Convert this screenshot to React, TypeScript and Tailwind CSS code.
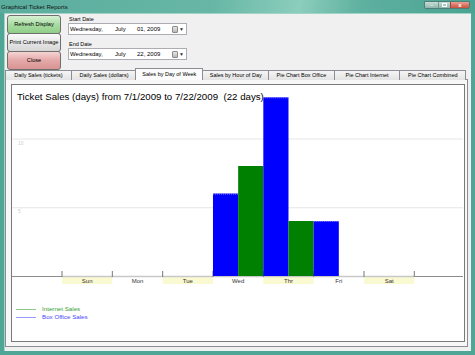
import React from 'react';

const days = ['Sun', 'Mon', 'Tue', 'Wed', 'Thr', 'Fri', 'Sat'];

// box office (blue) / internet (green) tickets per weekday
const sales = [
  { box: 0, net: 0 },
  { box: 0, net: 0 },
  { box: 0, net: 0 },
  { box: 6, net: 8 },
  { box: 13, net: 4 },
  { box: 4, net: 0 },
  { box: 0, net: 0 },
];

const tabs = [
  'Daily Sales (tickets)',
  'Daily Sales (dollars)',
  'Sales by Day of Week',
  'Sales by Hour of Day',
  'Pie Chart Box Office',
  'Pie Chart Internet',
  'Pie Chart Combined',
];

const X0 = 62;
const STEP = 50.33;
const BASE = 277;
const UNIT = 13.75;

function DateBox({ day }: { day: string }) {
  return (
    <div className="flex h-[12px] w-[119px] items-center border border-[#abadb3] bg-white pl-[1px] text-[6px] leading-none text-black">
      <span className="w-[45px]">Wednesday,</span>
      <span className="w-[22px]">July</span>
      <span className="flex-1">{day}, 2009</span>
      <span className="mr-[1px] h-[7px] w-[6px] rounded-[1px] border border-[#8a8a8a] bg-[linear-gradient(#e8e8e8,#b8b8b8)]" />
      <span className="mr-[2px] text-[5px] text-[#333]">▼</span>
    </div>
  );
}

function Chart() {
  return (
    <svg width={452} height={214} viewBox="12 86 452 214" className="block">
      <text x={17} y={100.5} fontSize={9.7} fill="#000" fontFamily="Liberation Sans, Arial, sans-serif">
        Ticket Sales (days) from 7/1/2009 to 7/22/2009{'\u00a0\u00a0'}(22 days)
      </text>
      {[5, 10].map((v) => (
        <g key={v}>
          <line x1={12} x2={463} y1={BASE - v * UNIT + 0.5} y2={BASE - v * UNIT + 0.5} stroke="#e6e6e6" />
          <text x={18} y={BASE - v * UNIT + 6} fontSize={5} fill="#cfcfcf" fontFamily="Liberation Sans, Arial, sans-serif">
            {v}
          </text>
        </g>
      ))}
      {days.map((d, i) => {
        const x = X0 + i * STEP;
        return (
          <g key={d}>
            {i % 2 === 0 && <rect x={x} y={278} width={STEP} height={7} fill="#fafad2" />}
            <text x={x + STEP / 2} y={284} fontSize={6} textAnchor="middle" fill="#333" fontFamily="Liberation Sans, Arial, sans-serif">
              {d}
            </text>
          </g>
        );
      })}
      <line x1={12} x2={463} y1={277.5} y2={277.5} stroke="#8c8c8c" />
      <line x1={X0} x2={X0 + 7 * STEP} y1={277.5} y2={277.5} stroke="#c8c8c8" strokeWidth={1.5} />
      {Array.from({ length: 8 }).map((_, i) => (
        <line key={i} x1={X0 + i * STEP} x2={X0 + i * STEP} y1={272} y2={278} stroke="#777" />
      ))}
      {sales.map((s, i) => {
        const x = X0 + i * STEP;
        const w = STEP / 2;
        return (
          <g key={i}>
            {s.box > 0 && (
              <>
                <rect x={x} y={BASE - s.box * UNIT} width={w} height={s.box * UNIT} fill="#0000ff" />
                <line x1={x} x2={x + w} y1={BASE - s.box * UNIT + 0.5} y2={BASE - s.box * UNIT + 0.5} stroke="#9a9aff" strokeDasharray="1 1" />
              </>
            )}
            {s.net > 0 && <rect x={x + w} y={BASE - s.net * UNIT} width={w} height={s.net * UNIT} fill="#008000" />}
          </g>
        );
      })}
    </svg>
  );
}

export default function App() {
  return (
    <div className="flex h-[355px] w-[475px] flex-col overflow-hidden bg-[#4fa696] font-['Liberation_Sans',Arial,sans-serif]">
      {/* title bar */}
      <div className="flex h-[13px] items-start bg-[linear-gradient(100deg,#5aac9c_0%,#68b7a6_45%,#8ccdbd_63%,#5eb09f_76%,#4aa392_100%)] pl-[1px] pr-[5px]">
        <span className="mt-[3px] text-[6.1px] leading-[7px] text-[#111]">Graphical Ticket Reports</span>
        <div className="ml-auto mt-[1px] flex h-[8px] overflow-hidden rounded-b-[2px] border border-[#4d7f76]">
          <div className="flex w-[13px] items-center justify-center bg-[linear-gradient(#c9ddd8,#8fb5ab)] text-[6px] leading-none text-white">–</div>
          <div className="flex w-[12px] items-center justify-center border-l border-[#6f9a91] bg-[linear-gradient(#c9ddd8,#8fb5ab)]">
            <span className="h-[4px] w-[5px] border border-white" />
          </div>
          <div className="flex w-[19px] items-center justify-center border-l border-[#8a4a40] bg-[linear-gradient(#eba092,#c9513f)] text-[6px] font-bold leading-none text-white">x</div>
        </div>
      </div>

      {/* client area */}
      <div className="mx-[4px] mb-[4px] flex flex-1 flex-col border-l border-t border-[#9fd4c7] bg-[#f0f0f0] pb-[4px]">
        <div className="flex items-start pl-[2px] pt-[1px]">
          <div className="flex w-[54px] flex-col text-[5.6px] leading-none text-black">
            <button className="h-[19px] rounded-[3px] border border-[#6f6f6f] bg-[linear-gradient(#d8f0d4,#a8dca2_50%,#90ce88)]">Refresh Display</button>
            <button className="-mt-[1px] h-[19px] rounded-[3px] border border-[#6f6f6f] bg-[linear-gradient(#fafafa,#e6e6e6_50%,#d6d6d6)]">Print Current Image</button>
            <button className="-mt-[1px] h-[19px] rounded-[3px] border border-[#6f6f6f] bg-[linear-gradient(#f6d4d4,#e4a8a8_50%,#d99494)]">Close</button>
          </div>
          <div className="ml-[7px] flex flex-col text-[5.5px] text-black">
            <div className="flex h-[8px] items-center pl-[1px]">Start Date</div>
            <DateBox day="01" />
            <div className="mt-[5px] flex h-[8px] items-center pl-[1px]">End Date</div>
            <DateBox day="22" />
          </div>
        </div>

        {/* tabs */}
        <div className="relative z-10 -mb-[1px] -mt-[2px] flex h-[12px] items-end">
          {tabs.map((t, i) =>
            i === 2 ? (
              <div key={t} className="-mx-[1px] flex h-[12px] w-[68px] items-center justify-center border border-b-0 border-[#8c8e94] bg-[#fbfbfb] text-[5.5px] text-black">
                {t}
              </div>
            ) : (
              <div key={t} className="-mr-[1px] flex h-[10px] w-[66.7px] items-center justify-center border border-b-0 border-[#8c8e94] bg-[linear-gradient(#f5f5f5,#e3e3e3)] text-[5.5px] text-black">
                {t}
              </div>
            ),
          )}
        </div>
        <div className="mr-[3px] flex flex-1 flex-col border border-[#8c8e94] bg-[#f7f7f7] pb-[4px] pl-[5px] pr-[2px] pt-[4px]">
          <div className="flex flex-1 flex-col border border-[#7a7a7a] bg-white">
            <Chart />
            <div className="flex flex-col pl-[4px] pt-[6px] text-[6.2px] leading-none">
              <div className="flex h-[8px] items-center gap-[6px] text-[#36a036]">
                <span className="h-0 w-[20px] border-t border-[#8cc88c]" />
                Internet Sales
              </div>
              <div className="flex h-[8px] items-center gap-[6px] text-[#4646ff]">
                <span className="h-0 w-[20px] border-t border-[#9a9aff]" />
                Box Office Sales
              </div>
            </div>
          </div>
        </div>
      </div>
    </div>
  );
}
